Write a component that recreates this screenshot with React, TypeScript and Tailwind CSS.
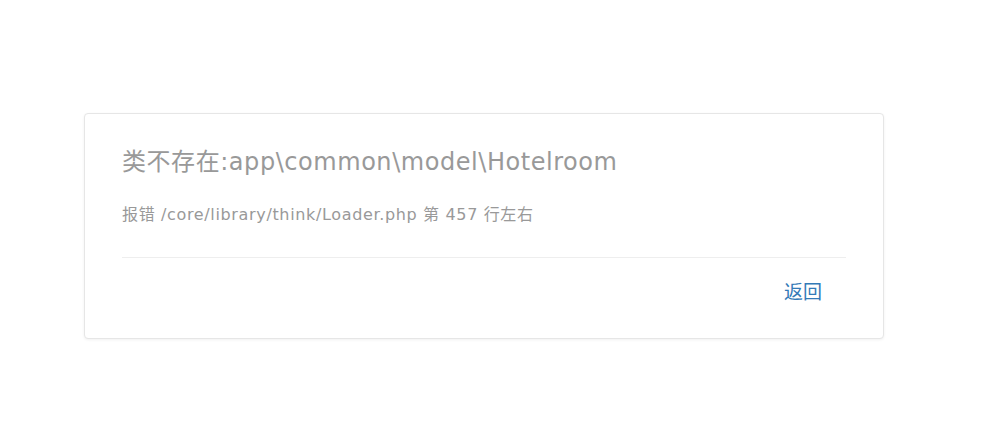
import React from 'react';

const App: React.FC = () => {
  return (
    <div
      className="min-h-[442px] bg-white pt-[113px] pl-[84px]"
      style={{ fontFamily: '"DejaVu Sans", "Noto Sans CJK SC", sans-serif' }}
    >
      <div className="w-[800px] h-[226px] bg-white border border-[#e6e6e6] rounded-[4px] shadow-[0_1px_3px_rgba(0,0,0,0.06)]">
        <div className="px-[37px] pt-[30px]">
          <h1 className="text-[24px] leading-[36px] tracking-[0.55px] text-[#999999] font-normal">
            类不存在:app\common\model\Hotelroom
          </h1>
          <p className="mt-[23px] text-[16px] leading-[24px] tracking-[0.65px] text-[#999999]">
            报错 /core/library/think/Loader.php 第 457 行左右
          </p>
          <div className="mt-[30px] border-t border-[#eeeeee]" />
          <div className="flex justify-end pt-[20px]">
            <button className="px-[24px] text-[19px] leading-[28px] text-[#337ab7] bg-transparent">
              返回
            </button>
          </div>
        </div>
      </div>
    </div>
  );
};

export default App;
